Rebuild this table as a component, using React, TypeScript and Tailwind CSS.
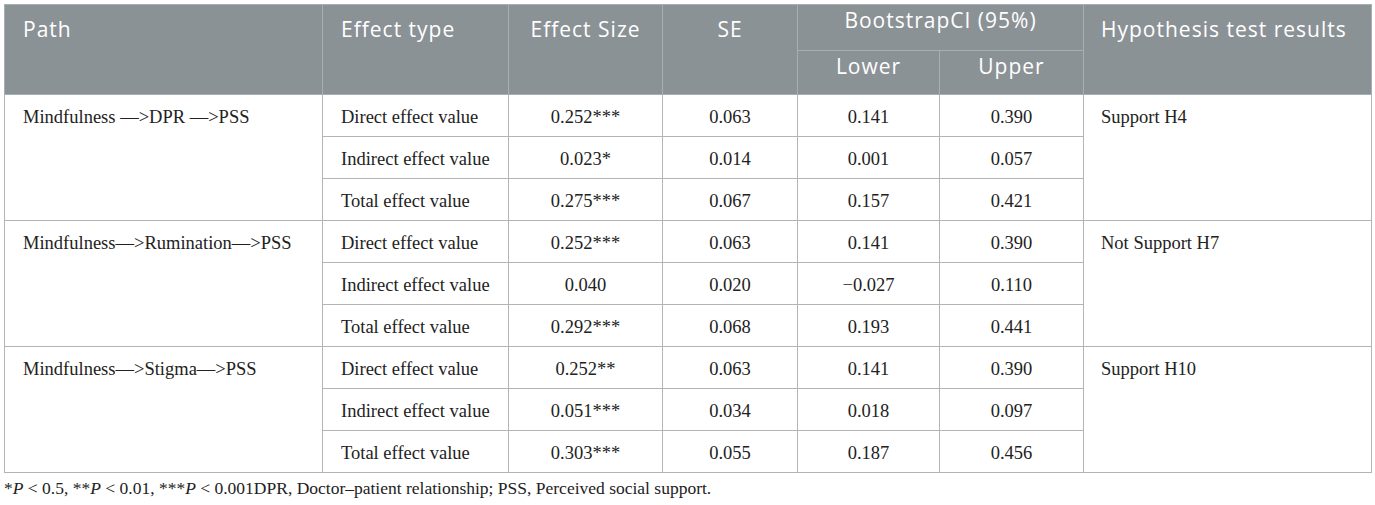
const rows = [
  {
    path: "Mindfulness —>DPR —>PSS",
    result: "Support H4",
    items: [
      ["Direct effect value", "0.252***", "0.063", "0.141", "0.390"],
      ["Indirect effect value", "0.023*", "0.014", "0.001", "0.057"],
      ["Total effect value", "0.275***", "0.067", "0.157", "0.421"],
    ],
  },
  {
    path: "Mindfulness—>Rumination—>PSS",
    result: "Not Support H7",
    items: [
      ["Direct effect value", "0.252***", "0.063", "0.141", "0.390"],
      ["Indirect effect value", "0.040", "0.020", "−0.027", "0.110"],
      ["Total effect value", "0.292***", "0.068", "0.193", "0.441"],
    ],
  },
  {
    path: "Mindfulness—>Stigma—>PSS",
    result: "Support H10",
    items: [
      ["Direct effect value", "0.252**", "0.063", "0.141", "0.390"],
      ["Indirect effect value", "0.051***", "0.034", "0.018", "0.097"],
      ["Total effect value", "0.303***", "0.055", "0.187", "0.456"],
    ],
  },
];

const th = "border border-[#a9aeb1] font-normal align-top";
const td = "border border-[#b4b4b4] h-[42px] pt-[4px] align-middle";

export default function App() {
  return (
    <div className="bg-white w-[1375px] h-[505px] pt-[4px] pl-[4px] text-[#222]">
      <table className="border-collapse table-fixed w-[1367px] font-['Liberation_Serif',serif] text-[18.5px]">
        <colgroup>
          <col className="w-[318px]" />
          <col className="w-[186px]" />
          <col className="w-[154px]" />
          <col className="w-[135px]" />
          <col className="w-[142px]" />
          <col className="w-[144px]" />
          <col className="w-[288px]" />
        </colgroup>
        <thead className="bg-[#8b9296] text-white font-['Open_Sans',sans-serif] text-[21px] tracking-[1px]">
          <tr className="h-[46px]">
            <th rowSpan={2} className={`${th} text-left pl-[18px] pt-[9px]`}>Path</th>
            <th rowSpan={2} className={`${th} text-left pl-[18px] pt-[9px]`}>Effect type</th>
            <th rowSpan={2} className={`${th} text-center pt-[9px]`}>Effect Size</th>
            <th rowSpan={2} className={`${th} text-center pt-[9px]`}>SE</th>
            <th colSpan={2} className={`${th} text-center align-middle`}>BootstrapCI (95%)</th>
            <th rowSpan={2} className={`${th} text-left pl-[17px] pt-[9px]`}>Hypothesis test results</th>
          </tr>
          <tr className="h-[44px]">
            <th className={`${th} text-center align-middle`}>Lower</th>
            <th className={`${th} text-center align-middle`}>Upper</th>
          </tr>
        </thead>
        <tbody>
          {rows.map((g) =>
            g.items.map((it, i) => (
              <tr key={g.path + i}>
                {i === 0 && (
                  <td rowSpan={3} className="border border-[#b4b4b4] align-top pl-[18px] pt-[9px]">
                    {g.path}
                  </td>
                )}
                <td className={`${td} pl-[18px]`}>{it[0]}</td>
                <td className={`${td} text-center`}>{it[1]}</td>
                <td className={`${td} text-center`}>{it[2]}</td>
                <td className={`${td} text-center`}>{it[3]}</td>
                <td className={`${td} text-center`}>{it[4]}</td>
                {i === 0 && (
                  <td rowSpan={3} className="border border-[#b4b4b4] align-top pl-[17px] pt-[9px]">
                    {g.result}
                  </td>
                )}
              </tr>
            ))
          )}
        </tbody>
      </table>
      <p className="font-['Liberation_Serif',serif] text-[17.5px] mt-[4px] leading-[22px]">
        *<i>P</i> &lt; 0.5, **<i>P</i> &lt; 0.01, ***<i>P</i> &lt; 0.001DPR, Doctor–patient relationship; PSS, Perceived social support.
      </p>
    </div>
  );
}
